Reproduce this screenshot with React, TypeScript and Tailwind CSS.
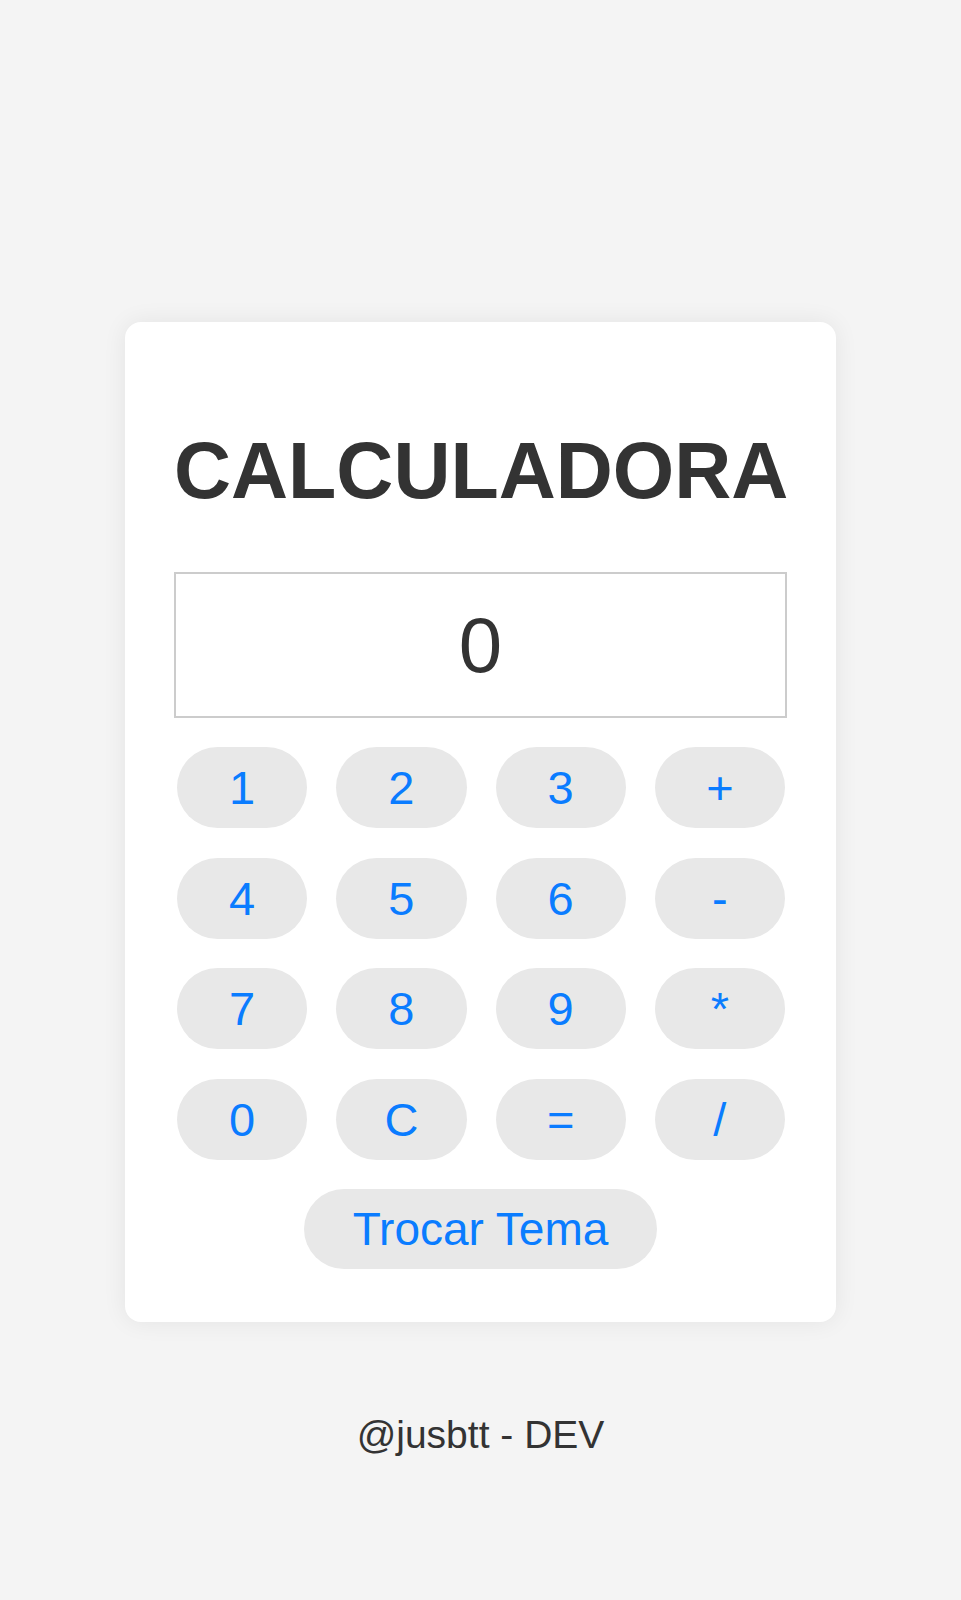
const keys = ['1', '2', '3', '+', '4', '5', '6', '-', '7', '8', '9', '*', '0', 'C', '=', '/']

export default function App() {
  return (
    <div className="flex min-h-[1600px] flex-col items-center bg-[#f4f4f4] pt-[322px] font-['Liberation_Sans',Arial,sans-serif]">
      <div className="w-[711px] rounded-2xl bg-white px-[49px] pb-[53px] pt-[109px] shadow-[0_0_24px_rgba(0,0,0,0.07)]">
        <h1 className="text-center text-[79px] font-bold leading-[80px] text-[#333]">CALCULADORA</h1>

        <div className="mt-[61px] flex h-[146px] items-center justify-center border-2 border-[#cccccc] text-[78px] leading-none text-[#333]">
          0
        </div>

        <div className="ml-[3px] mr-[2px] mt-[29px] grid grid-cols-4 gap-x-[29px] gap-y-[29.5px]">
          {keys.map((k) => (
            <button
              key={k}
              className="flex h-[81px] items-center justify-center rounded-full bg-[#e8e8e8] text-[47px] leading-none text-[#0a7cff]"
            >
              {k}
            </button>
          ))}
        </div>

        <button className="mx-auto mt-[29.5px] flex h-[80px] w-[353px] items-center justify-center rounded-full bg-[#e8e8e8] text-[46px] leading-none text-[#0a7cff]">
          Trocar Tema
        </button>
      </div>

      <p className="mt-[93px] text-[39px] leading-none text-[#333]">@jusbtt - DEV</p>
    </div>
  )
}
